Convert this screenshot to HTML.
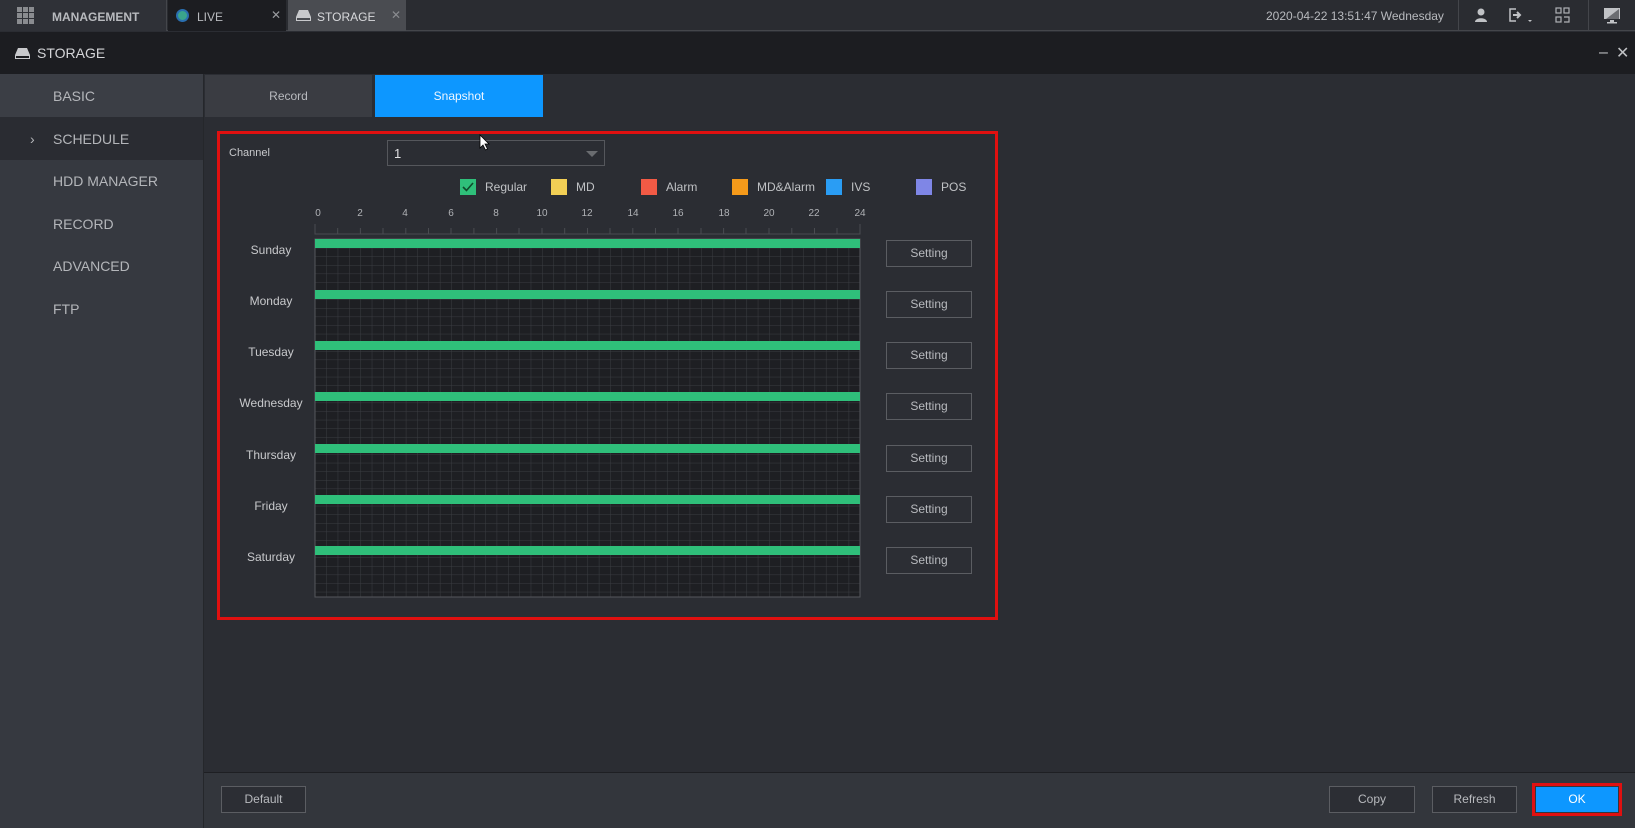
<!DOCTYPE html>
<html><head><meta charset="utf-8"><style>
*{margin:0;padding:0;box-sizing:border-box}
body{width:1635px;height:828px;overflow:hidden;background:#2b2d33;font-family:"Liberation Sans",sans-serif;color:#c8c9cc;position:relative}
.a{position:absolute}
.top{left:0;top:0;width:1635px;height:31px;background:#2a2c31;border-bottom:1px solid #44464b}
.title{left:0;top:32px;width:1635px;height:42px;background:#1c1d21}
.side{left:0;top:74px;width:203px;height:754px;background:#363940}
.si{position:absolute;left:53px;font-size:14px;color:#b4b6ba}
.btn{position:absolute;border:1px solid #5b5d62;background:#2c2e34;color:#b8babe;font-size:12px;text-align:center;line-height:25px}
.day{position:absolute;width:90px;left:226px;text-align:center;font-size:12px;color:#c8c9cc}
.hr{position:absolute;top:208px;font-size:10px;color:#b0b2b6;width:20px;margin-left:-10px;text-align:center}
.lg{position:absolute;top:179px;width:16px;height:16px}
.lt{position:absolute;top:180px;font-size:12px;color:#c0c2c5}
</style></head><body>
<div class="a top"></div>
<div class="a" style="left:0;top:0;width:167px;height:31px;background:#2f3137;border-right:1px solid #44464b"></div>
<svg class="a" style="left:17px;top:7px" width="18" height="17"><g fill="#8a8c90"><rect x="0" y="0" width="5" height="5"/><rect x="6" y="0" width="5" height="5"/><rect x="12" y="0" width="5" height="5"/><rect x="0" y="6" width="5" height="5"/><rect x="6" y="6" width="5" height="5"/><rect x="12" y="6" width="5" height="5"/><rect x="0" y="12" width="5" height="5"/><rect x="6" y="12" width="5" height="5"/><rect x="12" y="12" width="5" height="5"/></g></svg>
<div class="a" style="left:52px;top:10px;font-size:12px;font-weight:bold;color:#b8babe">MANAGEMENT</div>
<div class="a" style="left:168px;top:0;width:118px;height:31px;background:#1c1d21"></div>
<div class="a" style="left:176px;top:9px;width:13px;height:13px;border-radius:50%;background:#3aa58c;border:2px solid #2a6fb0"></div>
<div class="a" style="left:197px;top:10px;font-size:12px;color:#b8babe">LIVE</div>
<div class="a" style="left:271px;top:8px;font-size:12px;color:#9a9ca0">✕</div>
<div class="a" style="left:288px;top:0;width:118px;height:31px;background:#4a4c51"></div>
<svg class="a" style="left:296px;top:10px" width="15" height="11"><path d="M3 0h9l3 7v4H0V7z" fill="#c8c9cc"/><rect x="1" y="8" width="13" height="2" fill="#4a4c51"/></svg>
<div class="a" style="left:317px;top:10px;font-size:12px;color:#d8d9dc">STORAGE</div>
<div class="a" style="left:391px;top:8px;font-size:12px;color:#8a8c90">✕</div>
<div class="a" style="left:1266px;top:9px;font-size:12px;color:#b8babe">2020-04-22 13:51:47 Wednesday</div>
<div class="a" style="left:1458px;top:0;width:1px;height:31px;background:#44464b"></div>
<div class="a" style="left:1588px;top:0;width:1px;height:31px;background:#44464b"></div>
<svg class="a" style="left:1473px;top:8px" width="16" height="15"><circle cx="8" cy="4" r="3.5" fill="#c0c2c5"/><path d="M2 14c0-5 12-5 12 0z" fill="#c0c2c5"/></svg>
<svg class="a" style="left:1509px;top:8px" width="26" height="16"><path d="M7 1H1v12h6" stroke="#c0c2c5" stroke-width="1.5" fill="none"/><path d="M4 7h6M8 4l3 3-3 3" stroke="#c0c2c5" stroke-width="2" fill="none"/><path d="M19 12l2 2 2-2z" fill="#c0c2c5"/></svg>
<svg class="a" style="left:1555px;top:7px" width="15" height="16"><g stroke="#b0b2b6" fill="none" stroke-width="1.2"><rect x="1" y="1" width="5" height="5"/><rect x="9" y="1" width="5" height="5"/><rect x="1" y="10" width="5" height="5"/><path d="M9 10h5v5H9"/></g></svg>
<svg class="a" style="left:1603px;top:7px" width="18" height="17"><rect x="1" y="1" width="16" height="11" fill="#c0c2c5"/><path d="M16 2L3 12h13z" fill="#6a6c70"/><rect x="7" y="13" width="4" height="2" fill="#c0c2c5"/><rect x="4" y="15" width="10" height="1.5" fill="#c0c2c5"/></svg>

<div class="a title"></div>
<svg class="a" style="left:15px;top:48px" width="15" height="11"><path d="M3 0h9l3 7v4H0V7z" fill="#c8c9cc"/><rect x="1" y="8" width="13" height="2" fill="#1c1d21"/></svg>
<div class="a" style="left:37px;top:45px;font-size:14px;color:#d4d5d8">STORAGE</div>
<div class="a" style="left:1599px;top:44px;font-size:16px;color:#c0c2c5">–</div>
<div class="a" style="left:1616px;top:43px;font-size:16px;color:#c0c2c5">✕</div>

<div class="a side"></div>
<div class="a" style="left:0;top:74px;width:203px;height:43px;background:#3b3e45"></div>
<div class="a" style="left:0;top:117px;width:203px;height:43px;background:#2a2c32"></div>
<div class="a" style="left:203px;top:74px;width:1px;height:754px;background:#25272b"></div>
<div class="si" style="top:88px">BASIC</div>
<div class="si" style="top:131px;left:30px">›</div>
<div class="si" style="top:131px">SCHEDULE</div>
<div class="si" style="top:173px">HDD MANAGER</div>
<div class="si" style="top:216px">RECORD</div>
<div class="si" style="top:258px">ADVANCED</div>
<div class="si" style="top:301px">FTP</div>

<div class="a" style="left:205px;top:75px;width:167px;height:42px;background:#3a3c42;color:#b8babe;font-size:12px;text-align:center;line-height:42px">Record</div>
<div class="a" style="left:375px;top:75px;width:168px;height:42px;background:#0d97ff;color:#eef6ff;font-size:12px;text-align:center;line-height:42px">Snapshot</div>

<div class="a" style="left:217px;top:131px;width:781px;height:489px;border:3px solid #e01010"></div>
<div class="a" style="left:229px;top:147px;font-size:11px;color:#c8c9cc">Channel</div>
<div class="a" style="left:387px;top:140px;width:218px;height:26px;border:1px solid #55575c;background:#2b2d33"></div>
<div class="a" style="left:394px;top:146px;font-size:13px;color:#e0e1e3">1</div>
<div class="a" style="left:586px;top:151px;width:0;height:0;border-left:6px solid transparent;border-right:6px solid transparent;border-top:6px solid #6a6c70"></div>

<div class="lg" style="left:460px;background:#2fbf7a"><svg width="16" height="16"><path d="M3 8l3.5 3.5L13 4" stroke="#0f4a2a" stroke-width="1.6" fill="none"/></svg></div>
<div class="lt" style="left:485px">Regular</div>
<div class="lg" style="left:551px;background:#f2cf55"></div><div class="lt" style="left:576px">MD</div>
<div class="lg" style="left:641px;background:#f25a45"></div><div class="lt" style="left:666px">Alarm</div>
<div class="lg" style="left:732px;background:#f59a1a"></div><div class="lt" style="left:757px">MD&amp;Alarm</div>
<div class="lg" style="left:826px;background:#2a9df4"></div><div class="lt" style="left:851px">IVS</div>
<div class="lg" style="left:916px;background:#7f86e6"></div><div class="lt" style="left:941px">POS</div>

<div class="hr" style="left:318px">0</div><div class="hr" style="left:360px">2</div><div class="hr" style="left:405px">4</div><div class="hr" style="left:451px">6</div><div class="hr" style="left:496px">8</div><div class="hr" style="left:542px">10</div><div class="hr" style="left:587px">12</div><div class="hr" style="left:633px">14</div><div class="hr" style="left:678px">16</div><div class="hr" style="left:724px">18</div><div class="hr" style="left:769px">20</div><div class="hr" style="left:814px">22</div><div class="hr" style="left:860px">24</div>

<svg class="a" style="left:314px;top:222px" width="548" height="377">
<defs><pattern id="g" x="1" y="0" width="11.354" height="8.6" patternUnits="userSpaceOnUse"><path d="M0 0V8.6M0 0H11.354" stroke="#3b3d42" stroke-width="1" fill="none"/></pattern></defs>
<path d="M1 2V12H546V2" stroke="#4a4c51" fill="none"/>
<g stroke="#4a4c51"><path d="M23.7 6V12M46.4 6V12M69 6V12M91.8 6V12M114.5 6V12M137 6V12M159.9 6V12M182.6 6V12M205 6V12M228 6V12M250.7 6V12M273.5 6V12M296 6V12M318.8 6V12M341.5 6V12M364 6V12M387 6V12M409.6 6V12M432 6V12M455 6V12M477.8 6V12M500.5 6V12M523 6V12"/></g>
<rect x="1" y="17" width="545" height="358" fill="#1e1f23"/>
<rect x="1" y="17" width="545" height="358" fill="url(#g)"/>
<rect x="1" y="17" width="545" height="358" fill="none" stroke="#55575c"/>
<g fill="#2fbf7a"><rect x="1" y="17" width="545" height="9"/><rect x="1" y="68" width="545" height="9"/><rect x="1" y="119" width="545" height="9"/><rect x="1" y="170" width="545" height="9"/><rect x="1" y="222" width="545" height="9"/><rect x="1" y="273" width="545" height="9"/><rect x="1" y="324" width="545" height="9"/></g>
</svg>

<div class="day" style="top:243px">Sunday</div>
<div class="day" style="top:294px">Monday</div>
<div class="day" style="top:345px">Tuesday</div>
<div class="day" style="top:396px">Wednesday</div>
<div class="day" style="top:448px">Thursday</div>
<div class="day" style="top:499px">Friday</div>
<div class="day" style="top:550px">Saturday</div>

<div class="btn" style="left:886px;top:240px;width:86px;height:27px">Setting</div>
<div class="btn" style="left:886px;top:291px;width:86px;height:27px">Setting</div>
<div class="btn" style="left:886px;top:342px;width:86px;height:27px">Setting</div>
<div class="btn" style="left:886px;top:393px;width:86px;height:27px">Setting</div>
<div class="btn" style="left:886px;top:445px;width:86px;height:27px">Setting</div>
<div class="btn" style="left:886px;top:496px;width:86px;height:27px">Setting</div>
<div class="btn" style="left:886px;top:547px;width:86px;height:27px">Setting</div>

<div class="a" style="left:204px;top:772px;width:1431px;height:56px;background:#33363c;border-top:1px solid #1e1f23"></div>
<div class="btn" style="left:221px;top:786px;width:85px;height:27px">Default</div>
<div class="btn" style="left:1329px;top:786px;width:86px;height:27px">Copy</div>
<div class="btn" style="left:1432px;top:786px;width:85px;height:27px">Refresh</div>
<div class="a" style="left:1532px;top:783px;width:90px;height:33px;border:3px solid #e01010"></div>
<div class="btn" style="left:1536px;top:787px;width:82px;height:25px;background:#0d97ff;border-color:#0d97ff;color:#fff;line-height:23px">OK</div>
<svg class="a" style="left:479px;top:134px" width="12" height="18"><path d="M1 1v13l3-3 2.5 5 2-1-2.5-5h4z" fill="#fff" stroke="#000" stroke-width="0.8"/></svg>
</body></html>
